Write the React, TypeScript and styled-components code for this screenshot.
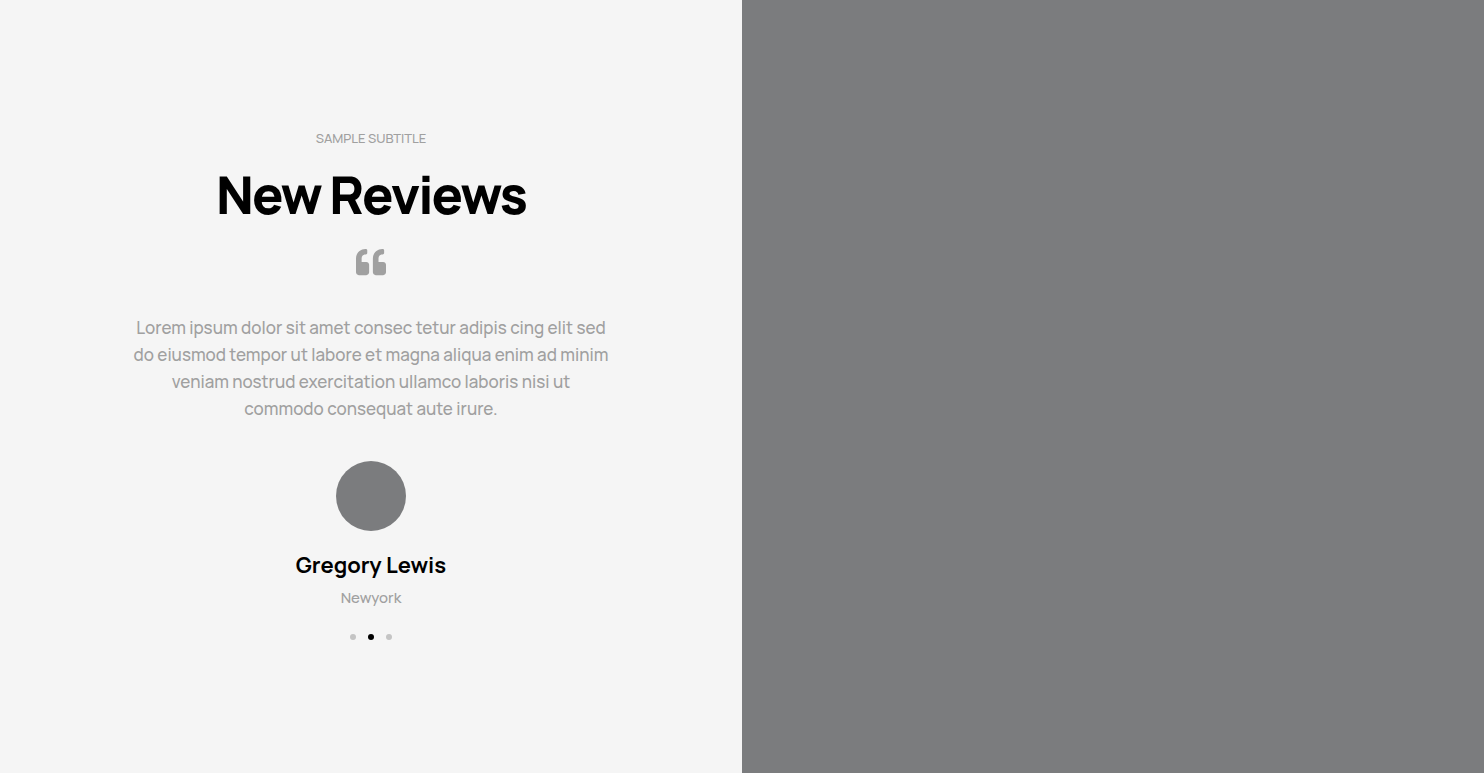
import React, { useState } from "react";
import styled, { createGlobalStyle } from "styled-components";

const GlobalStyle = createGlobalStyle`
  * { box-sizing: border-box; }
  body {
    margin: 0;
    background: #f5f5f5;
    font-family: Manrope, Inter, "Liberation Sans", sans-serif;
    font-weight: 500;
  }
`;

const Section = styled.section`
  display: grid;
  grid-template-columns: 1fr 1fr;
  min-height: 100vh;
`;

const Content = styled.div`
  display: flex;
  flex-direction: column;
  align-items: center;
  justify-content: center;
  padding: 16px 32px 22px;
  text-align: center;
`;

const Picture = styled.div`
  background: #7b7c7e;
`;

const Subtitle = styled.p`
  margin: 0;
  font-size: 13px;
  line-height: 20px;
  color: #a0a0a0;
  text-transform: uppercase;
`;

const Title = styled.h2`
  margin: 17px 0 22px;
  font-size: 52px;
  line-height: 60px;
  font-weight: 800;
  letter-spacing: -2px;
  color: #000;
`;

const QuoteIcon = styled.svg`
  display: block;
  width: 30px;
  height: 30px;
  fill: #a0a0a0;
`;

const Review = styled.figure`
  display: flex;
  flex-direction: column;
  align-items: center;
  margin: 37px 0 24px;
`;

const Quote = styled.blockquote`
  margin: 0;
  font-size: 17px;
  line-height: 27px;
  color: #a0a0a0;
`;

const Avatar = styled.div`
  width: 70px;
  height: 70px;
  margin: 39px 0 19px;
  border-radius: 50%;
  background: #7b7c7e;
`;

const Author = styled.figcaption`
  display: flex;
  flex-direction: column;
  gap: 6px;
`;

const Name = styled.span`
  font-size: 22px;
  line-height: 30px;
  font-weight: 700;
  color: #000;
`;

const City = styled.span`
  font-size: 15px;
  line-height: 24px;
  color: #a0a0a0;
`;

const Dots = styled.div`
  display: flex;
  gap: 12px;
`;

const Dot = styled.button<{ $active: boolean }>`
  width: 6px;
  height: 6px;
  padding: 0;
  border: 0;
  border-radius: 50%;
  background: ${({ $active }) => ($active ? "#000" : "#c4c4c4")};
  cursor: pointer;
`;

export default function App() {
  const [active, setActive] = useState(1);

  return (
    <>
      <GlobalStyle />
      <Section>
        <Content>
          <Subtitle>Sample Subtitle</Subtitle>
          <Title>New Reviews</Title>
          <QuoteIcon viewBox="0 0 512 512" aria-hidden="true">
            <path d="M464 256h-80v-64c0-35.3 28.7-64 64-64h8c13.3 0 24-10.7 24-24V56c0-13.3-10.7-24-24-24h-8c-88.4 0-160 71.6-160 160v240c0 26.5 21.5 48 48 48h128c26.5 0 48-21.5 48-48V304c0-26.5-21.5-48-48-48zm-288 0H96v-64c0-35.3 28.7-64 64-64h8c13.3 0 24-10.7 24-24V56c0-13.3-10.7-24-24-24h-8C71.6 32 0 103.6 0 192v240c0 26.5 21.5 48 48 48h128c26.5 0 48-21.5 48-48V304c0-26.5-21.5-48-48-48z" />
          </QuoteIcon>
          <Review>
            <Quote>
              Lorem ipsum dolor sit amet consec tetur adipis cing elit sed
              <br />
              do eiusmod tempor ut labore et magna aliqua enim ad minim
              <br />
              veniam nostrud exercitation ullamco laboris nisi ut
              <br />
              commodo consequat aute irure.
            </Quote>
            <Avatar />
            <Author>
              <Name>Gregory Lewis</Name>
              <City>Newyork</City>
            </Author>
          </Review>
          <Dots>
            {[0, 1, 2].map((index) => (
              <Dot
                key={index}
                type="button"
                $active={index === active}
                aria-label={`Review ${index + 1}`}
                onClick={() => setActive(index)}
              />
            ))}
          </Dots>
        </Content>
        <Picture />
      </Section>
    </>
  );
}
